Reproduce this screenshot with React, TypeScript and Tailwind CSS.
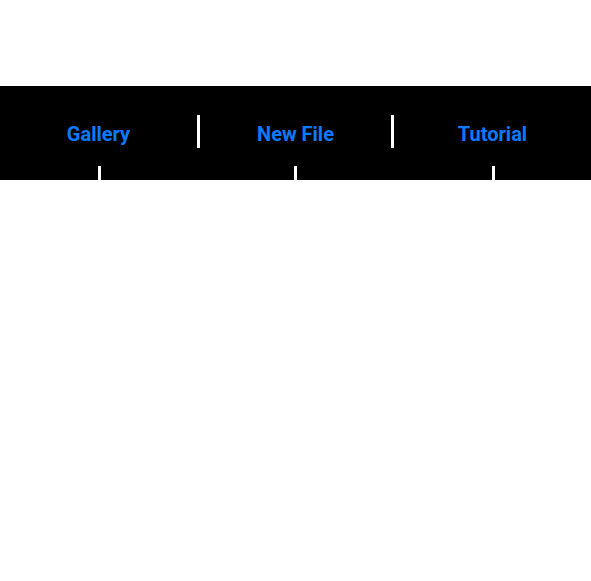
import React from "react";

function Col({ label }: { label: string }) {
  return (
    <div className="flex w-[197px] shrink-0 flex-col items-center">
      <div className="pt-[37px] text-[20px] leading-[23px] font-bold text-[#0a7aff]">{label}</div>
      <div className="mt-auto ml-[2px] h-[14px] w-[3px] bg-white" />
    </div>
  );
}

export default function App() {
  return (
    <div className="min-h-[581px] w-full bg-white" style={{ fontFamily: "Roboto, 'Liberation Sans', sans-serif" }}>
      <div className="h-[86px]" />
      <div className="flex h-[94px] w-full bg-black">
        <Col label="Gallery" />
        <div className="mt-[29px] h-[33px] w-[3px] shrink-0 bg-white" />
        <div className="flex min-w-0 flex-1 flex-col items-center">
          <div className="pt-[37px] text-[20px] leading-[23px] font-bold text-[#0a7aff]">New File</div>
          <div className="mt-auto h-[14px] w-[3px] bg-white" />
        </div>
        <div className="mt-[29px] h-[33px] w-[3px] shrink-0 bg-white" />
        <Col label="Tutorial" />
      </div>
    </div>
  );
}
